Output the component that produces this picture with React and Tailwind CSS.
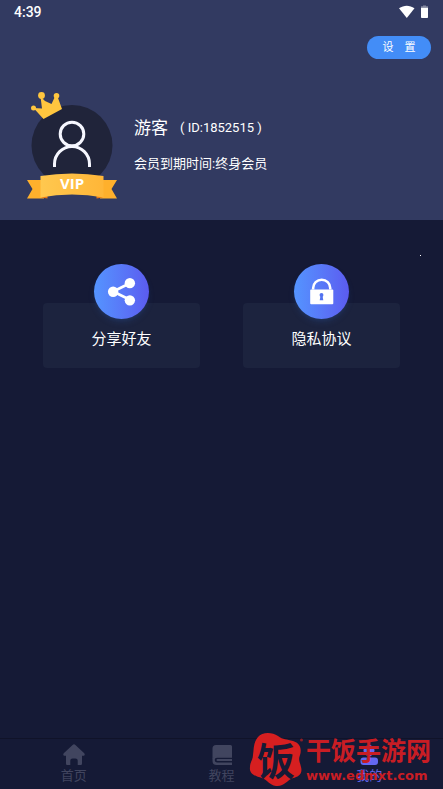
import React, { useState } from 'react';

// Bottom navigation items
const tabs = [
  { id: 'home', label: '首页', Icon: HomeIcon },
  { id: 'course', label: '教程', Icon: BookIcon },
  { id: 'mine', label: '我的', Icon: MineIcon },
];

function HomeIcon() {
  return (
    <svg viewBox="0 0 24 24" className="h-6 w-6" fill="currentColor" aria-hidden="true">
      <path d="M10.6 1.900a2 2 0 0 1 2.800 0l8.600 8.200c1.300 1.200.8 2.700-.9 2.700H20v7.700c0 1-.7 1.600-1.600 1.600h-2.700v-4.500a2.200 2.200 0 0 0-2.200-2.200h-3a2.200 2.200 0 0 0-2.200 2.200v4.500H5.600c-1 0-1.600-.6-1.600-1.600v-7.700H2.900c-1.700 0-2.200-1.500-.9-2.700z" />
    </svg>
  );
}

function BookIcon() {
  return (
    <svg viewBox="0 0 24 24" className="h-6 w-6" fill="currentColor" aria-hidden="true">
      <path d="M6 2h14.500A1.500 1.500 0 0 1 22 3.500V14H6.500A4.500 4.500 0 0 0 2.500 16V5.500A3.500 3.500 0 0 1 6 2z" />
      <path d="M22 13.500v1.300H7a2.300 2.300 0 0 0 0 4.600h15V22H6.500a4 4 0 0 1-4-4v-2.500a4.500 4.500 0 0 1 4-2z" />
      <path d="M7.500 16H22v2H7.500a1 1 0 0 1 0-2z" />
    </svg>
  );
}

function MineIcon() {
  return (
    <svg viewBox="0 0 24 24" className="h-6 w-6" fill="#6468f2" aria-hidden="true">
      <circle cx="12" cy="7.500" r="5.500" />
      <rect x="3.500" y="14.500" width="17.500" height="7.500" rx="3" />
    </svg>
  );
}

function ShareIcon() {
  return (
    <svg viewBox="0 0 56 56" className="size-[55px]" aria-hidden="true">
      <path d="M36.500 19.500 19.500 28l17 8.500" fill="none" stroke="#fff" strokeWidth="2.800" />
      <circle cx="36.500" cy="19.500" r="5.300" fill="#fff" />
      <circle cx="19.500" cy="28.200" r="5.300" fill="#fff" />
      <circle cx="36.500" cy="37" r="5.300" fill="#fff" />
    </svg>
  );
}

function LockIcon() {
  return (
    <svg viewBox="0 0 56 56" className="size-[55px]" aria-hidden="true">
      <path d="M19.500 26v-1.500a8.700 8.500 0 0 1 17.400 0V26" fill="none" stroke="#fff" strokeWidth="2.600" />
      <rect x="16.500" y="26" width="23.500" height="15" rx="1" fill="#fff" />
      <circle cx="28" cy="31.500" r="2" fill="#5272f0" />
      <path d="M27 32h2l.8 5h-3.600z" fill="#5272f0" />
    </svg>
  );
}

// Avatar with crown and VIP ribbon
function Avatar() {
  return (
    <svg viewBox="0 0 92 110" className="h-[110px] w-[92px] shrink-0" role="img" aria-label="VIP">
      <defs>
        <linearGradient id="ribbon" x1="0" x2="1">
          <stop offset="0" stopColor="#ffc84f" />
          <stop offset="1" stopColor="#ffb638" />
        </linearGradient>
      </defs>
      <circle cx="46" cy="55.500" r="40.500" fill="#20243a" />
      <circle cx="46" cy="44" r="11.800" fill="none" stroke="#f6f7ff" strokeWidth="3" />
      <path d="M28.500 77v-3a17.500 17.500 0 0 1 35 0v3" fill="none" stroke="#f6f7ff" strokeWidth="3" />
      <g fill="#ffc63f">
        <path d="M17.500 29 7.500 18 16 18.500 14.500 6.500 19 11 25.500 14 29.500 5.500 32 8 36 19z" />
        <circle cx="7.500" cy="18" r="2.500" />
        <circle cx="15.500" cy="5.500" r="3.400" />
        <circle cx="30.500" cy="5.800" r="2.800" />
      </g>
      <path d="M1 90h17v18.500H1L6.500 99z" fill="#ffb02c" />
      <path d="M91 90H74v18.500h17L85.500 99z" fill="#ffb02c" />
      <path d="m15 107.500 6.500 1v-5zM77 107.500l-6.500 1v-5z" fill="#e87916" />
      <path d="M14.500 86q31.500-5 63 0v21.500q-31.500-6-63 0z" fill="url(#ribbon)" />
      <text x="46" y="99" textAnchor="middle" fill="#fff" fontSize="15" className="font-['Open_Sans',sans-serif] font-bold">
        VIP
      </text>
    </svg>
  );
}

function StatusBar() {
  return (
    <div className="flex h-6 items-center justify-between pl-3.5 pr-3 text-white">
      <span className="font-[Roboto,sans-serif] text-sm font-medium">4:39</span>
      <svg viewBox="0 0 32 16" className="h-4 w-8" fill="#fff" aria-hidden="true">
        <path d="M0 4.300C5 .8 10.500.8 15.500 4.300L7.800 14z" />
        <path d="M22 3.800h7v9.500a.8.8 0 0 1-.8.8h-5.400a.8.8 0 0 1-.8-.8z" />
        <path d="M24 1.500h3v.8h2v1.500h-7V2.300h2z" opacity=".4" />
      </svg>
    </div>
  );
}

function ActionCard({ label, children }) {
  return (
    <button type="button" className="flex flex-1 flex-col items-center">
      <span className="z-10 -mb-4 flex size-[55px] items-center justify-center rounded-full bg-linear-to-r from-[#5494ff] to-[#5b5bf0] shadow-md shadow-[#2b4f91]/30">
        {children}
      </span>
      <span className="flex h-[65px] w-full items-center justify-center rounded bg-[#1c233e] pt-2 text-[15px] text-white">
        {label}
      </span>
    </button>
  );
}

// Site mark shown over the navigation
function SiteMark() {
  return (
    <div className="pointer-events-none absolute bottom-0 right-3 flex items-center gap-0.5 text-[#c91d24]">
      <svg viewBox="0 0 56 58" className="h-[58px] w-14" aria-hidden="true">
        <path
          d="M10 6C14 1 24 1 30 5c5 4 9 3 15 5 7 2 9 8 7 14-2 5 0 7 1 12 2 7-3 10-8 11-6 2-9 9-17 8-7-1-8-6-14-8-7-2-13-4-12-11 0-5 3-7 3-12 1-6 0-12 5-18z"
          fill="#d61f20"
        />
        <circle cx="53.500" cy="9" r="1.500" fill="#8e1d27" />
        <text x="28" y="44" textAnchor="middle" fontSize="38" fill="#151a36" className="font-['Noto_Sans_CJK_SC',sans-serif] font-bold">
          饭
        </text>
      </svg>
      <div className="flex flex-col">
        <span className="text-[25px] font-bold leading-8">干饭手游网</span>
        <span className="font-['DejaVu_Sans',sans-serif] text-[13px] font-bold leading-4">www.edmxt.com</span>
      </div>
    </div>
  );
}

function App() {
  const [active, setActive] = useState('mine');

  return (
    <div className="flex min-h-screen flex-col bg-[#151a36] font-[Roboto,'Noto_Sans_CJK_SC',sans-serif]">
      {/* Profile header */}
      <header className="bg-[#323a61] pb-5">
        <StatusBar />
        <div className="flex justify-end px-3 pt-3">
          <button type="button" className="h-[23px] w-16 rounded-full bg-[#438df7] pt-0.5 text-[11px] text-white">
            设&emsp;置
          </button>
        </div>
        <div className="flex items-start gap-4 pl-[26px] pt-[31px]">
          <Avatar />
          <div className="pt-[26px] text-white">
            <div className="flex items-center gap-3 leading-6">
              <h1 className="text-[17px]">游客</h1>
              <span className="text-[13px]">( ID:1852515 )</span>
            </div>
            <p className="mt-3 text-[13px] leading-6">会员到期时间:终身会员</p>
          </div>
        </div>
      </header>

      {/* Quick actions */}
      <main className="relative flex-1 px-[43px] pt-11">
        <span className="absolute right-[22px] top-[35px] size-px bg-white" />
        <div className="flex gap-[43px]">
          <ActionCard label="分享好友">
            <ShareIcon />
          </ActionCard>
          <ActionCard label="隐私协议">
            <LockIcon />
          </ActionCard>
        </div>
      </main>

      {/* Bottom navigation */}
      <nav className="relative flex border-t border-[#101329] pb-1 pt-1">
        {tabs.map(({ id, label, Icon }) => (
          <button
            key={id}
            type="button"
            onClick={() => setActive(id)}
            className={`flex flex-1 flex-col items-center text-[13px] leading-[18px] ${
              active === id ? 'text-[#5f63e8]' : 'text-[#41455f]'
            }`}
          >
            <Icon />
            {label}
          </button>
        ))}
        <SiteMark />
      </nav>
    </div>
  );
}

export default App;
